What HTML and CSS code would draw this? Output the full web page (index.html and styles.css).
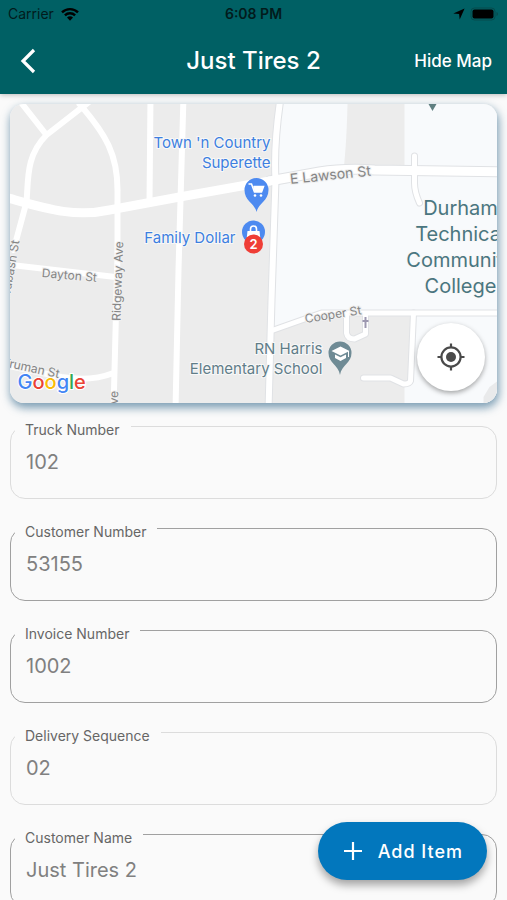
FILE: index.html
```html
<!DOCTYPE html>
<html lang="en">
<head>
<meta charset="utf-8">
<meta name="viewport" content="width=device-width, initial-scale=1">
<title>Just Tires 2</title>
<link rel="stylesheet" href="styles.css">
</head>
<body>
<div class="app">
  <header class="app-header">
    <div class="status-bar">
      <div class="status-left">
        <span>Carrier</span>
        <svg width="18" height="14" viewBox="0 0 18 14" aria-hidden="true">
          <g fill="none" stroke="#000" stroke-width="2.4">
            <path d="M1 5.4a11.3 11.3 0 0 1 16 0"/>
            <path d="M3.9 8.4a7.2 7.2 0 0 1 10.2 0"/>
          </g>
          <path d="M6 10.6a4.2 4.2 0 0 1 6 0L9 13.7z"/>
        </svg>
      </div>
      <time class="status-time">6:08 PM</time>
      <div class="status-right">
        <svg width="12" height="12" viewBox="0 0 12 12" aria-hidden="true"><path d="M11.6.4 6.7 11.6 6.1 5.9.3 5.4z"/></svg>
        <svg width="29" height="14" viewBox="0 0 29 14" aria-hidden="true">
          <rect x="1" y="1" width="24" height="12" rx="3.5" fill="none" stroke="#064a4c" stroke-width="1"/>
          <rect x="2.500" y="2.500" width="21" height="9" rx="2"/>
          <path d="M26.500 5q1.500.5 1.500 2t-1.500 2z" fill="#064a4c"/>
        </svg>
      </div>
    </div>
    <nav class="nav-bar">
      <button class="back" type="button" aria-label="Back">
        <svg width="16" height="26" viewBox="0 0 16 26" aria-hidden="true"><path d="M14 2 3 13l11 11" fill="none" stroke="#fff" stroke-width="3.2"/></svg>
      </button>
      <h1 class="title">Just Tires 2</h1>
      <button class="hide-map" type="button">Hide Map</button>
    </nav>
  </header>

  <main class="content">
    <section class="map" aria-label="Map">
      <svg class="map-canvas" viewBox="10 104 488 299" preserveAspectRatio="xMidYMid slice">
        <rect x="10" y="104" width="488" height="299" fill="#ececec"/>
        <path d="M279 104H348Q347 145 344 170L302 179 277 182z" fill="#f8fafc"/>
        <path d="M405 104H498V170H405z" fill="#f8fafc"/>
        <path d="M276 185 350 173 405 172 498 176V312H362L318 314 274 330z" fill="#f8fafc"/>
        <path d="M411 311H498V403H405V387L411 382z" fill="#f8fafc"/>
        <path d="M484 403V397L490 387 498 381V403z" fill="#e9eaeb"/>
        <g fill="none" stroke-linejoin="round" stroke-linecap="round">
          <g stroke="#e0e2e5">
            <path stroke-width="8" d="M281 98Q274 145 276 180L272 300 269 410"/>
            <path stroke-width="7" d="M415 156V183Q415 192 420 203"/>
            <path stroke-width="11" d="M270 181 320 172Q345 168 375 170L508 172"/>
            <path stroke-width="7" d="M274 330 322 313H365L508 313"/>
            <path stroke-width="7" d="M347 314V333Q348 339 355 339L366 334V315M414 313 411 381Q410 384 404 384L391 378H364"/>
          </g>
          <g stroke="#fff">
            <path stroke-width="6" d="M18 98 47 135M92 100 47 135C26 156 29 180 27 202L14 250M80 104C107 135 118 155 118 190L118 255 114 410M84 98 80 104M151 96 150 202M184 96 179 270 176 410"/>
            <path stroke-width="9" d="M5 197C45 208 74 218 110 210L180 197 270 181"/>
            <path stroke-width="9" d="M270 181 320 172Q345 168 375 170L508 172"/>
            <path stroke-width="6" d="M281 98Q274 145 276 180L272 300 269 410"/>
            <path stroke-width="6" d="M12 265 116 277M5 365 62 377Q91 382 114 373"/>
            <path stroke-width="5" d="M415 156V183Q415 192 420 203M274 330 322 313H365L508 313M347 314V333Q348 339 355 339L366 334V315M414 313 411 381Q410 384 404 384L391 378H364"/>
          </g>
        </g>
        <path d="M429 104h8l-4 7z" fill="#5f7f80"/>
        <path d="M366 317v11M363 321h6" stroke="#9d98b0" stroke-width="2" fill="none"/>

        <g class="road">
          <text x="291" y="184" transform="rotate(-6 291 184)" font-size="14">E Lawson St</text>
          <text x="42" y="277" transform="rotate(5 42 277)" font-size="12">Dayton St</text>
          <text x="121" y="321" transform="rotate(-88 121 321)" font-size="12">Ridgeway Ave</text>
          <text x="118" y="412" transform="rotate(-88 118 412)" font-size="12">Ave</text>
          <text x="20" y="241" transform="rotate(-80 20 241)" font-size="12" text-anchor="end">Wabash St</text>
          <text x="59" y="378" transform="rotate(12 59 378)" font-size="12" text-anchor="end">Truman St</text>
          <text x="306" y="323" transform="rotate(-9 306 323)" font-size="12">Cooper St</text>
        </g>
        <g class="shop" text-anchor="end">
          <text x="271" y="148">Town 'n Country</text>
          <text x="271" y="168">Superette</text>
          <text x="236" y="243">Family Dollar</text>
        </g>
        <g class="school" text-anchor="end">
          <text x="323" y="354">RN Harris</text>
          <text x="323" y="374">Elementary School</text>
        </g>
        <g class="college" text-anchor="middle">
          <text x="461" y="215">Durham</text>
          <text x="461" y="241">Technical</text>
          <text x="461" y="267">Community</text>
          <text x="461" y="293">College</text>
        </g>

        <path d="M257 212C255 203 245 201 245 190a12 12 0 0 1 24 0C269 201 259 203 257 212z" fill="#4d8af0"/>
        <path d="M249 184h3l3 8h7l2-5.500h-10" fill="none" stroke="#fff" stroke-width="1.600"/>
        <path d="M254 187h10l-2 5h-7z" fill="#fff"/>
        <circle cx="255.500" cy="195.500" r="1.300" fill="#fff"/><circle cx="261.500" cy="195.500" r="1.300" fill="#fff"/>

        <circle cx="254" cy="232" r="11.500" fill="#4d8af0"/>
        <path d="M248 231h12l1 9h-14z" fill="#fff"/>
        <path d="M251 232v-3a3 3 0 0 1 6 0v3" fill="none" stroke="#fff" stroke-width="1.600"/>
        <circle cx="254" cy="244" r="9.500" fill="#ef3e36"/>
        <text class="pin-count" x="254" y="249" text-anchor="middle">2</text>

        <path d="M340.500 375C339 365 329 363 329 353a11.500 11.500 0 0 1 23 0C352 363 342 365 340.500 375z" fill="#6f8b95"/>
        <path d="M332 351 341 346.500 350 351 341 355.500zM335.500 354.500 341 357.300 346.500 354.500V358L341 361 335.500 358z" fill="#fff"/>
        <path d="M349 351v6" stroke="#fff"/>

        <text class="google" x="18" y="389"><tspan fill="#4285f4">G</tspan><tspan fill="#ea4335">o</tspan><tspan fill="#fbbc05">o</tspan><tspan fill="#4285f4">g</tspan><tspan fill="#34a853">l</tspan><tspan fill="#ea4335">e</tspan></text>
      </svg>
      <button class="locate" type="button" aria-label="My location">
        <svg width="28" height="28" viewBox="0 0 28 28" aria-hidden="true">
          <circle cx="14" cy="14" r="5" fill="#4a4a4a"/>
          <g fill="none" stroke="#4a4a4a" stroke-width="2.200"><circle cx="14" cy="14" r="9.600"/><path d="M14 .5v4M14 23.500v4M.5 14h4M23.500 14h4"/></g>
        </svg>
      </button>
    </section>

    <form class="fields">
      <div class="field field-readonly">
        <label for="truck">Truck Number</label>
        <input id="truck" type="text" value="102" readonly>
      </div>
      <div class="field">
        <label for="customer">Customer Number</label>
        <input id="customer" type="text" value="53155">
      </div>
      <div class="field">
        <label for="invoice">Invoice Number</label>
        <input id="invoice" type="text" value="1002">
      </div>
      <div class="field field-readonly">
        <label for="sequence">Delivery Sequence</label>
        <input id="sequence" type="text" value="02" readonly>
      </div>
      <div class="field">
        <label for="name">Customer Name</label>
        <input id="name" type="text" value="Just Tires 2">
      </div>
    </form>
  </main>

  <button class="add-item" type="button">
    <svg width="18" height="18" viewBox="0 0 18 18" aria-hidden="true"><path d="M9 0v18M0 9h18" stroke="#fff" stroke-width="2.200"/></svg>
    <span>Add Item</span>
  </button>
</div>
</body>
</html>
```
FILE: styles.css
```css
* {
  box-sizing: border-box;
}

body {
  margin: 0;
  background: #fafafa;
  font-family: Inter, "Liberation Sans", sans-serif;
}

button {
  padding: 0;
  border: 0;
  background: none;
  color: inherit;
  font: inherit;
  cursor: pointer;
}

svg {
  display: block;
}

.app {
  position: relative;
  display: flex;
  flex-direction: column;
  height: 100vh;
  overflow: hidden;
}

.app-header {
  position: relative;
  z-index: 1;
  flex: none;
  background: #006064;
  box-shadow: 0 1px 5px rgba(0, 0, 0, 0.25);
}

.status-bar {
  display: grid;
  grid-template-columns: 1fr auto 1fr;
  align-items: center;
  height: 27px;
  padding: 0 8px;
  color: #021b1c;
  font-size: 14px;
}

.status-left,
.status-right {
  display: flex;
  align-items: center;
  gap: 7px;
}

.status-right {
  justify-content: flex-end;
  gap: 5px;
}

.status-time {
  font-weight: 600;
}

.nav-bar {
  display: grid;
  grid-template-columns: 1fr auto 1fr;
  align-items: center;
  height: 67px;
  padding: 0 15px;
  color: #fff;
}

.back {
  justify-self: start;
  padding-left: 5px;
}

.title {
  margin: 0;
  font-size: 24px;
  font-weight: 500;
}

.hide-map {
  justify-self: end;
  font-size: 17px;
  font-weight: 500;
}

.content {
  flex: 1;
  min-height: 0;
  padding: 10px 10px 0;
  overflow-y: auto;
  scrollbar-width: none;
}

.map {
  position: relative;
  border-radius: 14px;
  box-shadow: 1px 4px 8px 1px rgba(60, 110, 145, 0.65);
}

.map-canvas {
  width: 100%;
  height: 299px;
  border-radius: 14px;
}

.road {
  fill: #858585;
  stroke: #f0f0f0;
  stroke-width: 2px;
  paint-order: stroke;
}

.shop {
  fill: #3d7fe0;
  font-size: 15px;
}

.school {
  fill: #617d88;
  font-size: 15px;
}

.shop,
.school,
.college {
  stroke: #f8f8f8;
  stroke-width: 2px;
  paint-order: stroke;
}

.college {
  fill: #4a7680;
  font-size: 20px;
}

.pin-count {
  fill: #fff;
  font-size: 13px;
  font-weight: 600;
}

.google {
  font-size: 20px;
  font-weight: 500;
  stroke: #fff;
  stroke-width: 2px;
  paint-order: stroke;
}

.locate {
  position: absolute;
  right: 12px;
  bottom: 12px;
  display: grid;
  place-items: center;
  width: 68px;
  height: 68px;
  border-radius: 50%;
  background: #fff;
  box-shadow: 0 2px 5px rgba(0, 0, 0, 0.35);
}

.fields {
  display: grid;
  gap: 29px;
  padding: 23px 0 30px;
}

.field {
  position: relative;
}

.field label {
  position: absolute;
  top: -4px;
  left: 5px;
  padding: 0 11px 0 10px;
  background: #fafafa;
  color: #666;
  font-size: 14px;
  line-height: 16px;
}

.field input {
  display: block;
  width: 100%;
  height: 73px;
  padding: 0 15px 2px;
  border: 1px solid #a0a0a0;
  border-radius: 15px;
  outline: 0;
  background: transparent;
  color: #808080;
  font-family: inherit;
  font-size: 20px;
}

.field-readonly input {
  border-color: #dcdcdc;
}

.add-item {
  position: absolute;
  right: 20px;
  bottom: 20px;
  z-index: 2;
  display: flex;
  align-items: center;
  gap: 16px;
  height: 58px;
  padding: 0 24px 0 26px;
  border-radius: 29px;
  background: #0277bd;
  box-shadow: 0 5px 9px rgba(0, 0, 0, 0.35);
  color: #fff;
  font-size: 18px;
  font-weight: 500;
  letter-spacing: 1px;
}
```
